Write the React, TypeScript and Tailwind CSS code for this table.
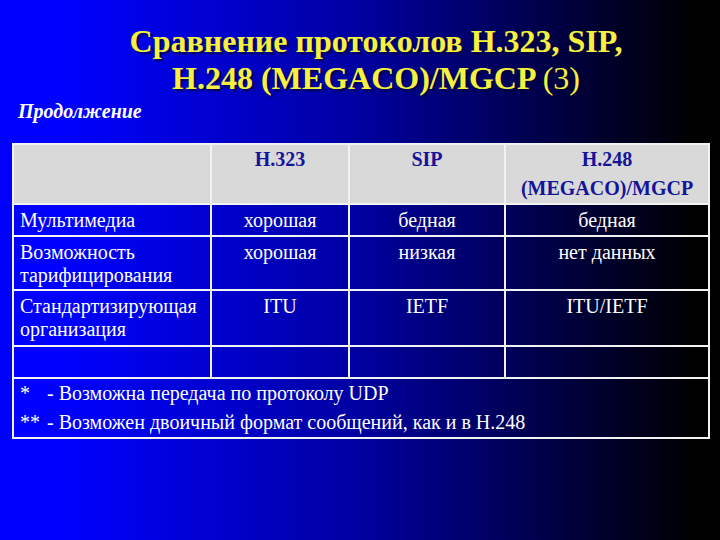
import React from "react";

const rows = [
  { a: "Мультимедиа", b: "хорошая", c: "бедная", d: "бедная", h: "h-[32px]" },
  { a: "Возможность тарифицирования", b: "хорошая", c: "низкая", d: "нет данных", h: "h-[54px]" },
  { a: "Стандартизирующая организация", b: "ITU", c: "IETF", d: "ITU/IETF", h: "h-[56px]" },
  { a: "", b: "", c: "", d: "", h: "h-[32px]" },
];

const cell = "border-2 border-[#f2f2f2] align-top font-['Liberation_Serif']";

export default function App() {
  return (
    <div className="w-[720px] h-[540px] overflow-hidden bg-[linear-gradient(to_right,#0000ff_9%,#0000a0_50%,#000000_97%)] text-white font-['Liberation_Serif']">
      <div className="pt-[23px] pl-[32px] text-center text-[32px] leading-[37px] font-bold text-[#f8f040] [text-shadow:2px_2px_2px_rgba(0,0,50,0.85)]">
        <div>Сравнение протоколов H.323, SIP,</div>
        <div>
          H.248 (MEGACO)/MGCP <span className="font-normal">(3)</span>
        </div>
      </div>
      <div className="mt-[3px] pl-[18px] text-[20px] leading-[23px] font-bold italic">Продолжение</div>
      <table className="mt-[20px] ml-[12px] w-[696px] table-fixed border-collapse text-[20px] leading-[23px]">
        <colgroup>
          <col className="w-[198px]" />
          <col className="w-[138px]" />
          <col className="w-[156px]" />
          <col className="w-[204px]" />
        </colgroup>
        <thead>
          <tr className="bg-[#d9d9d9] text-[#14149a] font-bold leading-[29px]">
            <td className={`${cell} h-[60px]`}></td>
            <td className={`${cell} h-[60px] text-center`}>H.323</td>
            <td className={`${cell} h-[60px] text-center`}>SIP</td>
            <td className={`${cell} h-[60px] text-center`}>
              <div>H.248</div>
              <div>(MEGACO)/MGCP</div>
            </td>
          </tr>
        </thead>
        <tbody>
          {rows.map((r, i) => (
            <tr key={i}>
              <td className={`${cell} ${r.h} pt-[4px] pl-[6px] text-left`}>{r.a}</td>
              <td className={`${cell} ${r.h} pt-[4px] text-center`}>{r.b}</td>
              <td className={`${cell} ${r.h} pt-[4px] text-center`}>{r.c}</td>
              <td className={`${cell} ${r.h} pt-[4px] text-center`}>{r.d}</td>
            </tr>
          ))}
          <tr>
            <td colSpan={4} className={`${cell} h-[60px] pl-[6px] leading-[29px]`}>
              <div>
                <span className="inline-block w-[27px]">*</span>- Возможна передача по протоколу UDP
              </div>
              <div>
                <span className="inline-block w-[27px]">**</span>- Возможен двоичный формат сообщений, как и в H.248
              </div>
            </td>
          </tr>
        </tbody>
      </table>
    </div>
  );
}
